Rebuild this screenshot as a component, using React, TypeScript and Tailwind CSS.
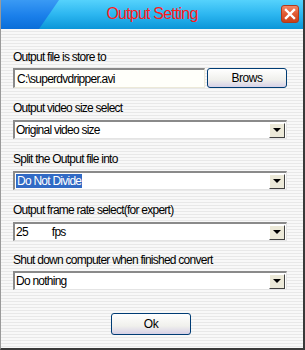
import React from 'react';

const font = { fontFamily: '"Liberation Sans", Arial, sans-serif' };

function Label({ text, className = '' }: { text: string; className?: string }) {
  return (
    <div className={`h-[14px] text-[12px] leading-[14px] tracking-[-0.75px] text-black ${className}`}>{text}</div>
  );
}

function Combo({ children, className = '' }: { children: React.ReactNode; className?: string }) {
  return (
    <div
      className={`flex h-[19px] w-[274px] items-center border-t-2 border-l-2 border-t-[#8a8a8a] border-l-[#8a8a8a] border-b border-r border-b-[#e4e4e4] border-r-[#e4e4e4] bg-white pl-[1px] ${className}`}
    >
      <div className="flex flex-1 items-center text-[12px] leading-[14px] tracking-[-0.75px] text-black">{children}</div>
      <div className="mr-[1px] flex h-[15px] w-[16px] items-center justify-center border border-t-white border-l-white border-b-[#404040] border-r-[#404040] bg-[#ece9d8]">
        <div className="h-0 w-0 border-x-[4px] border-t-[4px] border-x-transparent border-t-black" />
      </div>
    </div>
  );
}

function XpButton({ label, className = '' }: { label: string; className?: string }) {
  return (
    <div
      className={`flex w-[80px] items-center justify-center rounded-[3px] border border-[#003c74] bg-[linear-gradient(#ffffff,#f0f0ec_60%,#d6d0e6)] text-[12px] tracking-[-0.5px] text-black ${className}`}
    >
      {label}
    </div>
  );
}

export default function App() {
  return (
    <div style={font} className="flex h-[350px] w-[305px] flex-col border-r-2 border-b-2 border-r-[#3a3a3a] border-b-[#3a3a3a] border-l border-l-[#9a9a9a] select-none">
      <div className="relative h-[29px] shrink-0 bg-[linear-gradient(#55d2fc,#2cb6f0_50%,#0b96d8)]">
        <div className="absolute inset-0 bg-[linear-gradient(#3a9af4,#1a7fea_55%,#0a6ed8)] [clip-path:polygon(0_0,58px_0,38px_100%,0_100%)]" />
        <div className="relative flex h-full items-center justify-center pb-[1px] text-[16px] tracking-[-0.8px] text-[#ff1a1a]">
          Output Setting
        </div>
        <div className="absolute top-[5px] right-[4px] flex h-[18px] w-[18px] items-center justify-center rounded-[3px] border border-[#b03a1c] bg-[linear-gradient(#f28866,#e05a32_50%,#c8401a)]">
          <svg width="12" height="12" viewBox="0 0 12 12">
            <path d="M2 2 L10 10 M10 2 L2 10" stroke="white" strokeWidth="2.4" strokeLinecap="square" />
          </svg>
        </div>
      </div>

      <div className="flex flex-1 flex-col bg-[repeating-linear-gradient(#f8f8f8_0_2px,#e8e8e8_2px_3px)] px-[12px]">
        <Label text="Output file is store to" className="mt-[21px]" />
        <div className="mt-[4px] flex h-[20px] items-center gap-[2px]">
          <div className="flex h-[20px] w-[192px] items-center border-t-2 border-l-2 border-t-[#8a8a8a] border-l-[#8a8a8a] border-b border-r border-b-[#ece9d8] border-r-[#ece9d8] bg-[#fffffa] pl-[2px] text-[12px] tracking-[-0.75px] text-black">
            C:\superdvdripper.avi
          </div>
          <XpButton label="Brows" className="h-[20px]" />
        </div>

        <Label text="Output video size select" className="mt-[13px]" />
        <Combo className="mt-[5px]">Original video size</Combo>

        <Label text="Split the Output file into" className="mt-[13px]" />
        <Combo className="mt-[5px]">
          <span className="bg-[#316ac5] px-[1px] text-white">Do Not Divide</span>
        </Combo>

        <Label text="Output frame rate select(for expert)" className="mt-[13px]" />
        <Combo className="mt-[5px]">
          <span>25</span>
          <span className="ml-[24px]">fps</span>
        </Combo>

        <Label text="Shut down computer when finished convert" className="mt-[12px]" />
        <Combo className="mt-[4px]">Do nothing</Combo>

        <div className="mt-[23px] flex justify-center pr-[2px]">
          <XpButton label="Ok" className="h-[22px]" />
        </div>
      </div>
    </div>
  );
}
